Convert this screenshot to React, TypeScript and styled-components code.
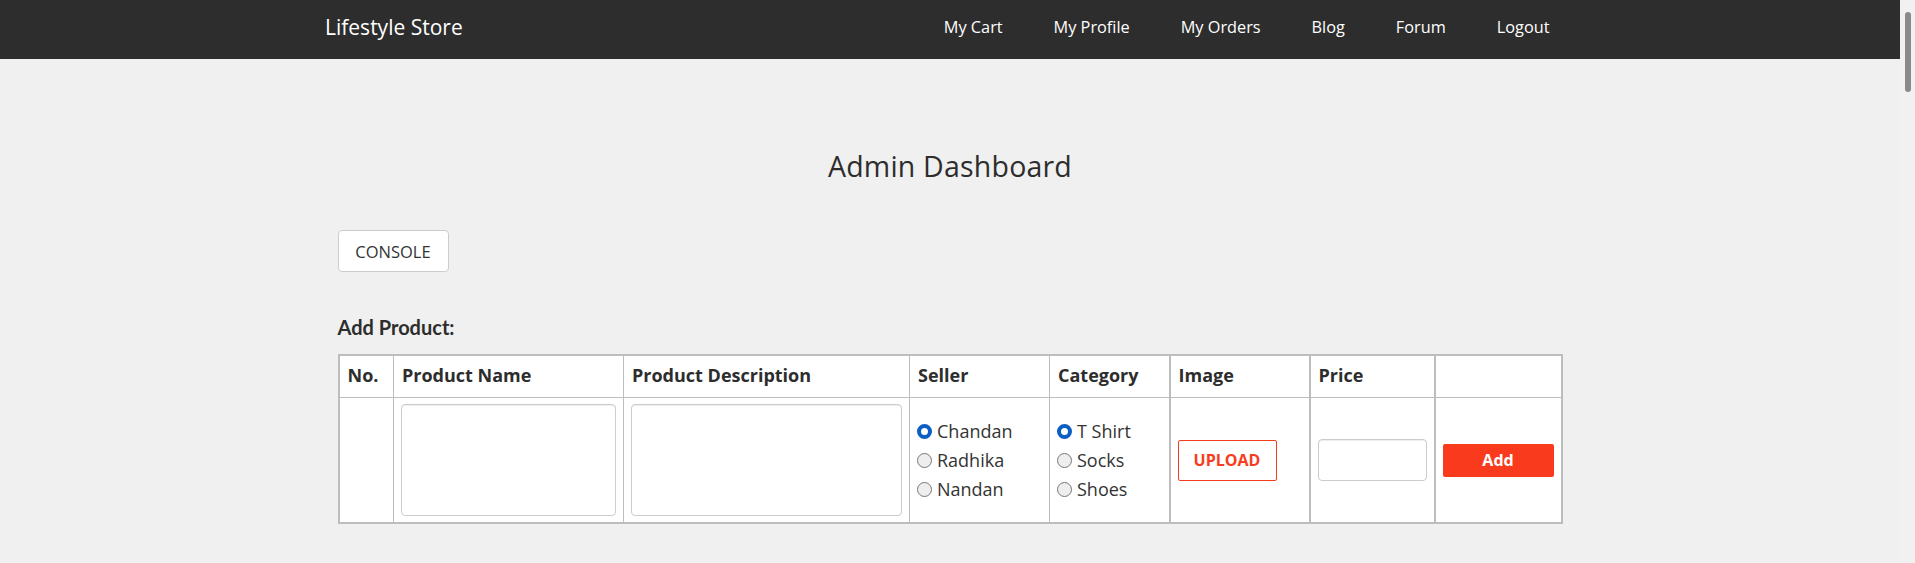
import styled, {createGlobalStyle} from "styled-components";

const GlobalStyle = createGlobalStyle`
    body {
        margin: 0;
        background-color: #f0f0f0;
        font-family: "Open Sans", "Liberation Sans", sans-serif;
        color: #2d2d2d;
    }
    * {
        box-sizing: border-box;
    }
`;

// the page keeps a 15px gutter on the right for the scrollbar
const Page = styled.div`
    margin-right: 15px;
`;

const ScrollTrack = styled.div`
    position: fixed;
    top: 0;
    right: 0;
    width: 15px;
    height: 100vh;
    background-color: #f1f1f1;
    display: flex;
    justify-content: center;
    padding-top: 12px;
`;

const ScrollThumb = styled.div`
    width: 6px;
    height: 80px;
    border-radius: 3px;
    background-color: #8a8a8a;
`;

const Navbar = styled.nav`
    background-color: #2d2d2d;
    height: 59px;
`;

const NavInner = styled.div`
    width: 1250px;
    margin: 0 auto;
    display: flex;
    justify-content: space-between;
    align-items: flex-start;
`;

const Brand = styled.a`
    margin-top: 13px;
    font-size: 21px;
    line-height: 28px;
    color: #fff;
    text-decoration: none;
`;

const NavList = styled.ul`
    list-style: none;
    margin: 0;
    padding: 0;
    display: flex;
`;

const NavLink = styled.a`
    display: block;
    padding: 15px 25.5px 20px;
    font-size: 16.3px;
    line-height: 24px;
    color: #fff;
    text-decoration: none;
`;

const Main = styled.main`
    width: 1225px;
    margin: 0 auto;
    padding-bottom: 200px;
`;

const Title = styled.h1`
    margin: 88px 0 0;
    text-align: center;
    font-size: 28.5px;
    line-height: 38px;
    font-weight: 400;
    letter-spacing: 0.2px;
`;

const ConsoleButton = styled.button`
    display: block;
    margin-top: 45px;
    width: 111px;
    height: 42px;
    background-color: #fff;
    border: 1px solid #ccc;
    border-radius: 4px;
    font-family: "Open Sans", sans-serif;
    font-size: 16.5px;
    color: #333;
`;

const SectionLabel = styled.h4`
    margin: 43px 0 15px;
    font-family: Lato, "Open Sans", sans-serif;
    font-weight: 700;
    font-size: 20px;
    line-height: 24px;
`;

const ProductTable = styled.table`
    width: 100%;
    table-layout: fixed;
    border-collapse: collapse;
    background-color: #fff;
    border: 2px solid #bdbdbd;
`;

const HeadCell = styled.th<{ $width: number; $thick?: boolean }>`
    width: ${(props) => props.$width}px;
    padding: 7px 8px 10px;
    text-align: left;
    font-size: 18px;
    line-height: 24px;
    font-weight: 700;
    border: 1px solid #bdbdbd;
    border-left-width: ${(props) => (props.$thick ? 2 : 1)}px;
`;

const Cell = styled.td<{ $thick?: boolean }>`
    padding: 6px 7px;
    vertical-align: middle;
    border: 1px solid #bdbdbd;
    border-left-width: ${(props) => (props.$thick ? 2 : 1)}px;
`;

const TextBox = styled.textarea`
    display: block;
    width: 100%;
    height: 112px;
    border: 1px solid #ccc;
    border-radius: 4px;
    box-shadow: inset 0 1px 1px rgba(0, 0, 0, 0.075);
    resize: none;
`;

const RadioGroup = styled.div`
    display: flex;
    flex-direction: column;
`;

const RadioRow = styled.label`
    display: flex;
    align-items: center;
    gap: 5px;
    font-size: 18px;
    line-height: 29px;
    color: #333;
`;

const Radio = styled.input.attrs({type: "radio"})`
    appearance: none;
    margin: 0;
    width: 15px;
    height: 15px;
    border-radius: 50%;
    border: 1px solid #777;
    background-color: #eee;
    &:checked {
        border: 4px solid #0b5ec4;
        background-color: #fff;
    }
`;

const UploadButton = styled.button`
    width: 99px;
    height: 41px;
    background-color: #fff;
    border: 1px solid #f83c1e;
    border-radius: 2px;
    color: #f83c1e;
    font-family: "Open Sans", sans-serif;
    font-weight: 700;
    font-size: 16px;
`;

const PriceInput = styled.input`
    display: block;
    width: 100%;
    height: 42px;
    border: 1px solid #ccc;
    border-radius: 4px;
    box-shadow: inset 0 1px 1px rgba(0, 0, 0, 0.075);
`;

const AddButton = styled.button`
    display: block;
    width: 100%;
    height: 33px;
    background-color: #fa3a1d;
    border: none;
    border-radius: 2px;
    color: #fff;
    font-family: "Open Sans", sans-serif;
    font-weight: 700;
    font-size: 16px;
`;

const links = ["My Cart", "My Profile", "My Orders", "Blog", "Forum", "Logout"];

const columns = [
    {label: "No.", width: 55},
    {label: "Product Name", width: 230},
    {label: "Product Description", width: 286},
    {label: "Seller", width: 140},
    {label: "Category", width: 120},
    {label: "Image", width: 140, thick: true},
    {label: "Price", width: 125, thick: true},
    {label: "", width: 127, thick: true},
];

const sellers = ["Chandan", "Radhika", "Nandan"];
const categories = ["T Shirt", "Socks", "Shoes"];

function RadioList({name, options}: { name: string; options: string[] }) {
    return (
        <RadioGroup>
            {options.map((option, i) => (
                <RadioRow key={option}>
                    <Radio name={name} defaultChecked={i === 0}/>
                    {option}
                </RadioRow>
            ))}
        </RadioGroup>
    );
}

function App() {
    return (
        <>
            <GlobalStyle/>
            <Page>
                <Navbar>
                    <NavInner>
                        <Brand href="#">Lifestyle Store</Brand>
                        <NavList>
                            {links.map((link) => (
                                <li key={link}>
                                    <NavLink href="#">{link}</NavLink>
                                </li>
                            ))}
                        </NavList>
                    </NavInner>
                </Navbar>
                <Main>
                    <Title>Admin Dashboard</Title>
                    <ConsoleButton>CONSOLE</ConsoleButton>
                    <SectionLabel>Add Product:</SectionLabel>
                    <ProductTable>
                        <thead>
                            <tr>
                                {columns.map((col, i) => (
                                    <HeadCell key={i} $width={col.width} $thick={col.thick}>
                                        {col.label}
                                    </HeadCell>
                                ))}
                            </tr>
                        </thead>
                        <tbody>
                            <tr>
                                <Cell></Cell>
                                <Cell><TextBox/></Cell>
                                <Cell><TextBox/></Cell>
                                <Cell><RadioList name="seller" options={sellers}/></Cell>
                                <Cell><RadioList name="category" options={categories}/></Cell>
                                <Cell $thick><UploadButton>UPLOAD</UploadButton></Cell>
                                <Cell $thick><PriceInput type="text"/></Cell>
                                <Cell $thick><AddButton>Add</AddButton></Cell>
                            </tr>
                        </tbody>
                    </ProductTable>
                </Main>
            </Page>
            <ScrollTrack>
                <ScrollThumb/>
            </ScrollTrack>
        </>
    );
}

export default App;
